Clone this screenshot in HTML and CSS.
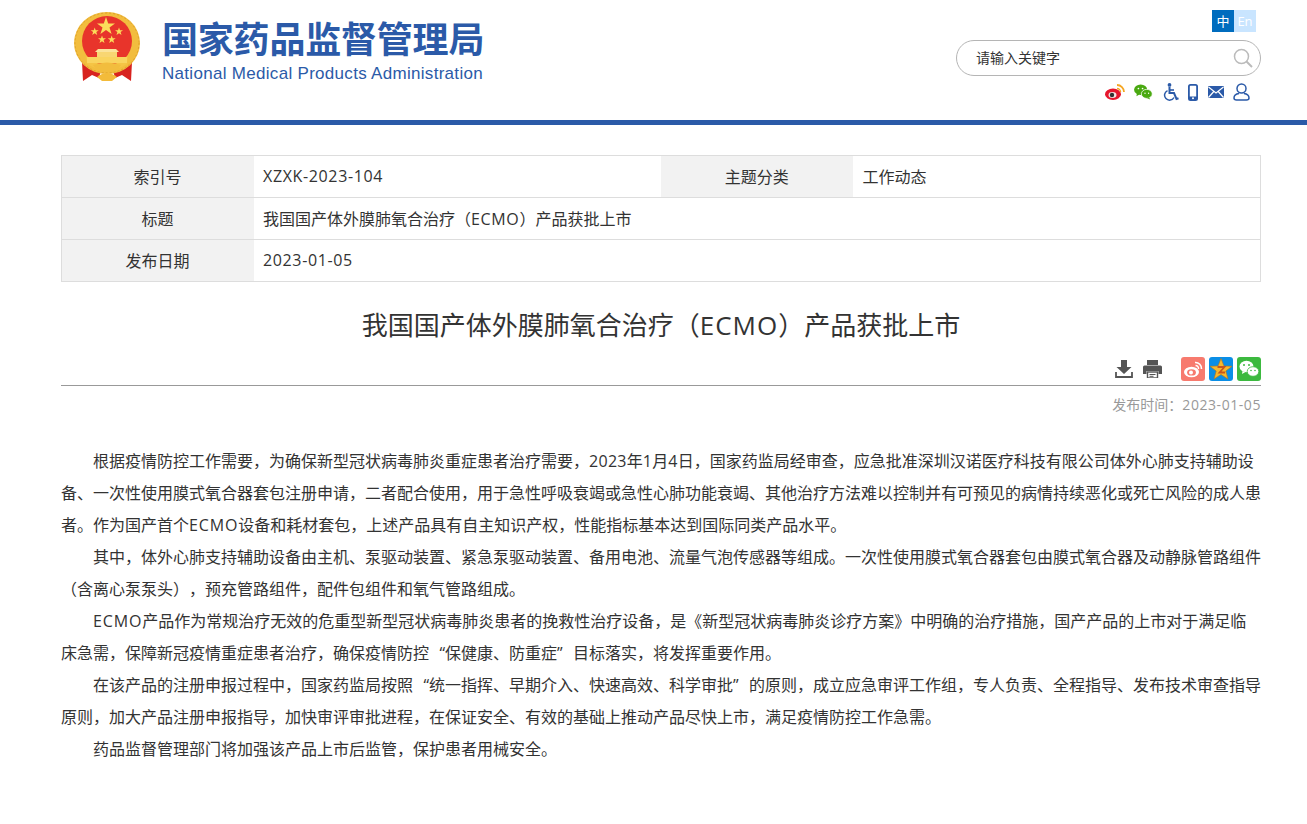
FILE: index.html
```html
<!DOCTYPE html>
<html lang="zh-CN">
<head>
<meta charset="utf-8">
<title>我国国产体外膜肺氧合治疗（ECMO）产品获批上市</title>
<link rel="stylesheet" href="styles.css">
</head>
<body>
<header class="site-header">
  <div class="wrap header-inner">
    <a class="brand">
      <svg class="emblem" viewBox="0 0 66 70" width="66" height="70">
        <path d="M8 50 L15 46 L27 58 L25 66 L18 63 L9 69 Z" fill="#d8231f"/>
        <path d="M58 50 L51 46 L39 58 L41 66 L48 63 L57 69 Z" fill="#d8231f"/>
        <ellipse cx="33" cy="31" rx="33" ry="31" fill="#f2bd3e"/>
        <ellipse cx="33" cy="31" rx="32" ry="30" fill="none" stroke="#dea02a" stroke-width="1" stroke-dasharray="2 2"/>
        <circle cx="33" cy="29" r="25" fill="#e8342b"/>
        <path d="M12 44 Q33 62 54 44 L53 52 Q33 64 13 52 Z" fill="#f5c445"/>
        <polygon class="star" points="32,5 34.2,11.5 41,11.5 35.5,15.5 37.6,22 32,18 26.4,22 28.5,15.5 23,11.5 29.8,11.5"/>
        <polygon class="star" points="20.7,15.5 21.7,18.3 24.7,18.3 22.3,20 23.2,23 20.7,21.2 18.2,23 19.1,20 16.7,18.3 19.7,18.3"/>
        <polygon class="star" points="45,15.5 46,18.3 49,18.3 46.6,20 47.5,23 45,21.2 42.5,23 43.4,20 41,18.3 44,18.3"/>
        <polygon class="star" points="28,23.5 29,26.3 32,26.3 29.6,28 30.5,31 28,29.2 25.5,31 26.4,28 24,26.3 27,26.3"/>
        <polygon class="star" points="37.7,23.5 38.7,26.3 41.7,26.3 39.3,28 40.2,31 37.7,29.2 35.2,31 36.1,28 33.7,26.3 36.7,26.3"/>
        <path d="M24 37 H42 L45 40 H21 Z" fill="#fbe39a"/>
        <rect x="23" y="40" width="20" height="5" fill="#f8d672"/>
        <rect x="13" y="45" width="40" height="6" fill="#f9d45f"/>
        <path d="M19 53 Q33 48 47 53 Q43 60 33 60 Q23 60 19 53 Z" fill="#f2bd3e"/>
        <path d="M23 65 Q33 57 43 65 L38 69 H28 Z" fill="#f3bb3a"/>
      </svg>
      <div class="brand-text">
        <div class="brand-cn">国家药品监督管理局</div>
        <div class="brand-en">National Medical Products Administration</div>
      </div>
    </a>
    <div class="tools">
      <div class="lang"><span class="lang-cn">中</span><span class="lang-en">En</span></div>
      <div class="search">
        <span class="search-text">请输入关键字</span>
        <svg viewBox="0 0 20 20" width="20" height="20" class="search-icon"><circle cx="8.5" cy="8.5" r="7" fill="none" stroke="#bbb" stroke-width="1.5"/><path d="M13.5 13.5 L19 19" stroke="#bbb" stroke-width="2"/></svg>
      </div>
      <div class="quick">
        <svg viewBox="0 0 20 16" width="20" height="16"><ellipse cx="8" cy="10.3" rx="8" ry="5.7" fill="#e6162d"/><ellipse cx="7.5" cy="11" rx="4" ry="3" fill="#f4e4e4"/><circle cx="7" cy="11" r="2.2" fill="#333"/><path d="M12 1 A7 7 0 0 1 19 8" fill="none" stroke="#f5a623" stroke-width="1.8"/><path d="M12 4.5 A3.5 3.5 0 0 1 15.5 8" fill="none" stroke="#f5a623" stroke-width="1.5"/></svg>
        <svg viewBox="0 0 20 17" width="19" height="16"><ellipse cx="7" cy="6" rx="7" ry="5.6" fill="#4aa911"/><path d="M3 10 L2.5 13 L6 11 Z" fill="#4aa911"/><ellipse cx="13.5" cy="10.5" rx="5.8" ry="4.8" fill="#4aa911" stroke="#fff" stroke-width=".8"/><path d="M16 14 L17 16.5 L13.5 15 Z" fill="#4aa911"/><circle cx="4.6" cy="4.8" r=".9" fill="#fff"/><circle cx="9" cy="4.8" r=".9" fill="#fff"/><circle cx="11.6" cy="9.8" r=".7" fill="#fff"/><circle cx="15.4" cy="9.8" r=".7" fill="#fff"/></svg>
        <svg viewBox="0 0 16 18" width="16" height="18"><circle cx="6.5" cy="1.9" r="1.9" fill="#2b5aa8"/><path d="M6.5 4 V10 H11 L13.5 16 L15.5 15.2" fill="none" stroke="#2b5aa8" stroke-width="2"/><path d="M6.5 7 H11" stroke="#2b5aa8" stroke-width="1.6"/><path d="M4.5 7.6 A5 5 0 1 0 11 14.5" fill="none" stroke="#2b5aa8" stroke-width="1.5"/></svg>
        <svg viewBox="0 0 10 17" width="10" height="17"><rect x=".9" y=".9" width="8.2" height="15.2" rx="1.6" fill="none" stroke="#2b5aa8" stroke-width="1.8"/><rect x="1" y="12.5" width="8" height="3.5" fill="#2b5aa8"/><circle cx="5" cy="14.3" r="1" fill="#fff"/></svg>
        <svg viewBox="0 0 16 12" width="16" height="12"><rect width="16" height="12" rx="1" fill="#2b5aa8"/><path d="M.5 1 L8 7 L15.5 1 M.5 11.5 L5.8 5.5 M15.5 11.5 L10.2 5.5" fill="none" stroke="#fff" stroke-width="1.2"/></svg>
        <svg viewBox="0 0 17 18" width="17" height="18"><circle cx="8.5" cy="5.5" r="4.5" fill="none" stroke="#2b5aa8" stroke-width="1.5"/><path d="M6 10.5 C2 11 1 13 1 15 C1 16.5 2 17 3.5 17 H13.5 C15 17 16 16.5 16 15 C16 13 15 11 11 10.5" fill="none" stroke="#2b5aa8" stroke-width="1.5"/></svg>
      </div>
    </div>
  </div>
</header>

<main class="wrap">
  <table class="meta">
    <tr>
      <th>索引号</th><td><span class="lt">XZXK-2023-104</span></td>
      <th>主题分类</th><td>工作动态</td>
    </tr>
    <tr>
      <th>标题</th><td colspan="3">我国国产体外膜肺氧合治疗（<span class="lt">ECMO</span>）产品获批上市</td>
    </tr>
    <tr>
      <th>发布日期</th><td colspan="3"><span class="lt">2023-01-05</span></td>
    </tr>
  </table>

  <h1 class="title">我国国产体外膜肺氧合治疗（<span class="lt">ECMO</span>）产品获批上市</h1>

  <div class="actions">
    <svg viewBox="0 0 18 18" width="18" height="18"><path d="M6 0 H12 V7 H16.5 L9 14 L1.5 7 H6 Z" fill="#555"/><path d="M1 12 V17 H17 V12" fill="none" stroke="#555" stroke-width="1.8"/></svg>
    <svg class="print" viewBox="0 0 19 18" width="19" height="18"><path d="M4 0 H15 V5 H4 Z" fill="#555"/><path d="M1.5 5.5 H17.5 Q19 5.5 19 7 V14 H15.5 V11 H3.5 V14 H0 V7 Q0 5.5 1.5 5.5 Z" fill="#555"/><rect x="4.5" y="12" width="10" height="6" fill="#fff" stroke="#555" stroke-width="1.4"/><path d="M6.5 14.5 H12.5 M6.5 16.3 H10.5" stroke="#555"/></svg>
    <div class="shares">
      <svg viewBox="0 0 24 24" width="24" height="24"><rect width="24" height="24" rx="3" fill="#f77a6e"/><ellipse cx="10.5" cy="15" rx="7.5" ry="5.3" fill="#fff"/><ellipse cx="10.5" cy="15.4" rx="4.4" ry="3.2" fill="#f77a6e"/><circle cx="10" cy="15.5" r="2" fill="#fff"/><path d="M14 5.5 A6 6 0 0 1 20.5 12" fill="none" stroke="#fff" stroke-width="1.6"/><path d="M14.5 8.5 A3 3 0 0 1 17.5 12" fill="none" stroke="#fff" stroke-width="1.4"/></svg>
      <svg viewBox="0 0 24 24" width="24" height="24"><rect width="24" height="24" rx="3" fill="#0a8ee6"/><polygon points="12,1.5 15,9 23,9.3 16.8,14 19,22 12,17.5 5,22 7.2,14 1,9.3 9,9" fill="#f6b82d" stroke="#b9741a" stroke-width=".6"/><path d="M8.5 10 H15.5 L10.5 15.5 H16" fill="none" stroke="#c8561c" stroke-width="1.8"/></svg>
      <svg viewBox="0 0 24 24" width="24" height="24"><rect width="24" height="24" rx="3" fill="#3cb93f"/><ellipse cx="9.5" cy="9.5" rx="7" ry="5.8" fill="#fff"/><path d="M5.5 14 L5 17 L8.5 15 Z" fill="#fff"/><ellipse cx="16" cy="14.5" rx="5.8" ry="4.8" fill="#fff" stroke="#3cb93f" stroke-width=".8"/><circle cx="7" cy="8" r="1" fill="#3cb93f"/><circle cx="12" cy="8" r="1" fill="#3cb93f"/><circle cx="14" cy="13.5" r=".8" fill="#3cb93f"/><circle cx="18" cy="13.5" r=".8" fill="#3cb93f"/></svg>
    </div>
  </div>

  <div class="pubdate">发布时间：<span class="lt">2023-01-05</span></div>

  <article class="content">
    <p>根据疫情防控工作需要，为确保新型冠状病毒肺炎重症患者治疗需要，<span class="num">2023</span>年<span class="num">1</span>月<span class="num">4</span>日，国家药监局经审查，应急批准深圳汉诺医疗科技有限公司体外心肺支持辅助设备、一次性使用膜式氧合器套包注册申请，二者配合使用，用于急性呼吸衰竭或急性心肺功能衰竭、其他治疗方法难以控制并有可预见的病情持续恶化或死亡风险的成人患者。作为国产首个<span class="lt">ECMO</span>设备和耗材套包，上述产品具有自主知识产权，性能指标基本达到国际同类产品水平。</p>
    <p>其中，体外心肺支持辅助设备由主机、泵驱动装置、紧急泵驱动装置、备用电池、流量气泡传感器等组成。一次性使用膜式氧合器套包由膜式氧合器及动静脉管路组件（含离心泵泵头），预充管路组件，配件包组件和氧气管路组成。</p>
    <p><span class="lt">ECMO</span>产品作为常规治疗无效的危重型新型冠状病毒肺炎患者的挽救性治疗设备，是《新型冠状病毒肺炎诊疗方案》中明确的治疗措施，国产产品的上市对于满足临床急需，保障新冠疫情重症患者治疗，确保疫情防控<span class="q-open">“</span>保健康、防重症<span class="q-close">”</span>目标落实，将发挥重要作用。</p>
    <p>在该产品的注册申报过程中，国家药监局按照<span class="q-open">“</span>统一指挥、早期介入、快速高效、科学审批<span class="q-close">”</span>的原则，成立应急审评工作组，专人负责、全程指导、发布技术审查指导原则，加大产品注册申报指导，加快审评审批进程，在保证安全、有效的基础上推动产品尽快上市，满足疫情防控工作急需。</p>
    <p>药品监督管理部门将加强该产品上市后监管，保护患者用械安全。</p>
  </article>
</main>
</body>
</html>
```
FILE: styles.css
```css
* { box-sizing: border-box; }
html, body { margin: 0; padding: 0; }
body {
  background: #fff;
  color: #333;
  font-family: "Open Sans", "Noto Sans CJK SC", sans-serif;
  font-size: 16px;
  text-spacing-trim: space-all;
  text-autospace: no-autospace;
}
.wrap { width: 1200px; margin-left: 61px; }
.lt { letter-spacing: .04em; }
.num { letter-spacing: .3px; }
.content .lt { letter-spacing: .85px; }
.q-open, .q-close { display: inline-block; width: 1em; text-indent: 0; }
.q-open { text-align: right; }
.q-close { text-align: left; }
.site-header { height: 125px; border-bottom: 5px solid #2b5aa8; margin-bottom: 30px; }
.header-inner { display: flex; justify-content: space-between; height: 120px; }
.brand { display: flex; align-items: flex-start; margin-left: 13px; padding-top: 12px; }
.emblem { display: block; flex: none; }
.star { fill: #fbdc5a; }
.brand-text { margin-left: 22px; padding-top: 7px; color: #2b5aa8; width: 322px; }
.brand-cn { font-size: 36px; line-height: 42px; font-weight: 700; white-space: nowrap; letter-spacing: -0.2px; }
.brand-en { font-family: "Liberation Sans", sans-serif; font-size: 17px; line-height: 20px; margin-top: 3px; white-space: nowrap; letter-spacing: .3px; }
.tools { display: flex; flex-direction: column; align-items: flex-end; width: 305px; padding-top: 10px; }
.lang { display: flex; margin-right: 5px; font-size: 13px; line-height: 22px; text-align: center; color: #fff; }
.lang-cn { width: 22px; height: 22px; background: #006cbe; }
.lang-en { width: 22px; height: 22px; background: #c9e5ff; }
.search { width: 305px; height: 36px; margin-top: 8px; border: 1px solid #b5b5b5; border-radius: 18px; display: flex; align-items: center; justify-content: space-between; padding: 0 7px 0 19px; }
.search-text { font-size: 14px; line-height: 32px; height: 32px; color: #333; }
.search-icon { display: block; }
.quick { display: flex; align-items: center; gap: 9.4px; margin-top: 6px; margin-right: 11px; height: 20px; }
.quick svg { display: block; }
.meta { width: 1200px; border-collapse: collapse; table-layout: fixed; color: #333; }
.meta tr { height: 42px; }
.meta th, .meta td { padding: 0 10px 1px 9.5px; font-weight: 400; font-size: 16px; border-top: 1px solid #ddd; border-bottom: 1px solid #ddd; }
.meta th { width: 192px; background: #f2f2f2; text-align: center; }
.meta td { background: #fff; }
.meta tr > :first-child { border-left: 1px solid #ddd; }
.meta tr > :last-child { border-right: 1px solid #ddd; }
.title { margin: 23px 0 0; font-size: 26px; line-height: 40px; font-weight: 400; color: #333; text-align: center; }
.actions { display: flex; justify-content: flex-end; align-items: center; gap: 10px; height: 32px; padding-bottom: 1px; margin-top: 9px; border-bottom: 1px solid #999; }
.actions svg { display: block; }
.print { margin-right: 9px; }
.shares { display: flex; gap: 4px; }
.pubdate { margin-top: 9px; text-align: right; font-size: 14px; line-height: 20px; color: #999; }
.content { margin-top: 30px; margin-right: -.5px; font-size: 16px; line-height: 32px; color: #333; }
.content p { margin: 0; text-indent: 32px; }
```
